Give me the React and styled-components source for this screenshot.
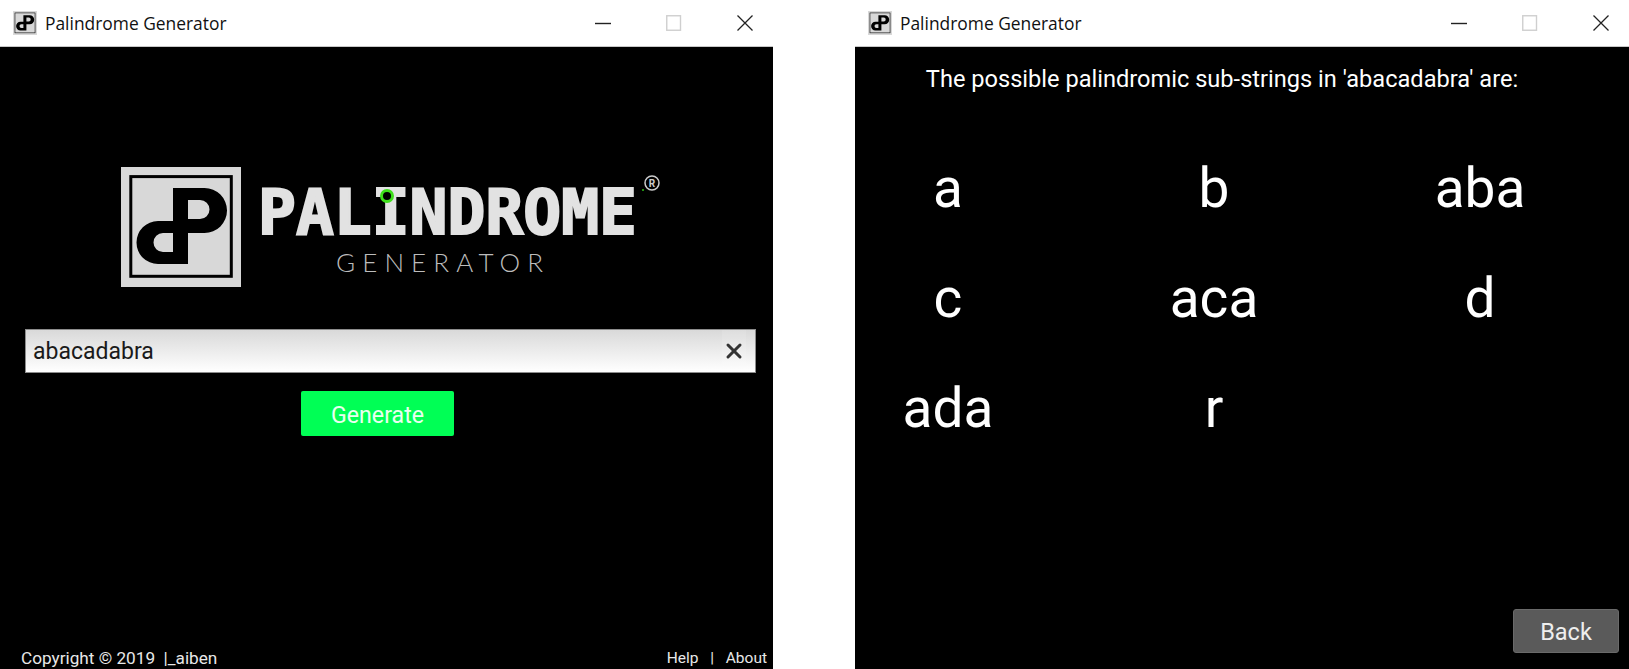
import React from 'react';
import styled, { createGlobalStyle } from 'styled-components';
import { X } from 'lucide-react';

const GlobalStyle = createGlobalStyle`
  html, body {
    margin: 0;
    padding: 0;
    background: #fff;
    overflow: hidden;
  }
  * {
    box-sizing: border-box;
  }
`;

const Screen = styled.div`
  display: flex;
  justify-content: space-between;
  width: 1629px;
  height: 669px;
`;

const Window = styled.section`
  display: flex;
  flex-direction: column;
  width: ${props => props.$width}px;
  height: 100%;
`;

const TitleBar = styled.header`
  display: flex;
  align-items: center;
  flex: none;
  height: 47px;
  padding-left: 13px;
  background: #fff;
  border-bottom: 1px solid #c8c8c8;
`;

const TitleText = styled.span`
  margin-left: 8px;
  font-family: 'Open Sans', sans-serif;
  font-size: 17.4px;
  color: #111;
  white-space: nowrap;
`;

const Controls = styled.div`
  display: flex;
  align-items: center;
  gap: 55px;
  margin-left: auto;
  padding-right: 20px;
`;

const ControlIcon = styled.svg`
  display: block;
  width: 16px;
  height: 16px;
  fill: none;
`;

const Body = styled.main`
  display: flex;
  flex-direction: column;
  flex: 1;
  min-height: 0;
  background: #000;
  font-family: Roboto, sans-serif;
  color: #fff;
`;

const BigLogo = styled.svg`
  display: block;
  flex: none;
  width: 560px;
  height: 130px;
  margin: 113px 0 0 110px;
`;

const SearchBox = styled.div`
  display: flex;
  align-items: center;
  height: 44px;
  margin: 39px 17px 0 25px;
  padding: 0 9px 0 7px;
  border: 1px solid #8c8c8c;
  background: linear-gradient(#d9d9d9, #ffffff);
`;

const SearchInput = styled.input`
  flex: 1;
  min-width: 0;
  border: 0;
  padding: 0;
  outline: 0;
  background: transparent;
  font-family: Roboto, sans-serif;
  font-size: 23px;
  color: #1a1a1a;
`;

const ClearButton = styled.span`
  display: flex;
  align-items: center;
  align-self: stretch;
  background: rgba(255, 255, 255, 0.12);
  color: #333;
`;

const GenerateButton = styled.button`
  align-self: flex-start;
  width: 153px;
  height: 45px;
  margin: 18px 0 0 301px;
  padding: 2px 0 0;
  border: 0;
  border-radius: 2px;
  background: #00ff55;
  font-family: Roboto, sans-serif;
  font-size: 23.2px;
  color: #eafff0;
`;

const Footer = styled.footer`
  display: flex;
  justify-content: space-between;
  margin-top: auto;
  padding: 0 6px 1px 21px;
  font-size: 17.2px;
  line-height: 20px;
  color: #e8e8e8;
`;

const FooterLinks = styled.span`
  font-size: 15.5px;
  word-spacing: 2px;
`;

const Heading = styled.h1`
  margin: 19px 0 0;
  padding-right: 40px;
  font-size: 23.6px;
  font-weight: 400;
  line-height: 26px;
  text-align: center;
`;

const ResultGrid = styled.ul`
  display: grid;
  grid-template-columns: repeat(3, 186px);
  grid-auto-rows: 60px;
  column-gap: 80px;
  row-gap: 50px;
  margin: 66px 0 0;
  padding: 0;
  list-style: none;
`;

const ResultItem = styled.li`
  font-size: 55px;
  line-height: 60px;
  text-align: center;
`;

const BackButton = styled.button`
  align-self: flex-end;
  width: 106px;
  height: 44px;
  margin: auto 10px 16px 0;
  padding: 2px 0 0;
  border: 1px solid #6a6a6a;
  border-radius: 3px;
  background: #5a5a5a;
  font-family: Roboto, sans-serif;
  font-size: 23.5px;
  color: #eee;
`;

const SmallMark = styled.svg`
  display: block;
  flex: none;
  width: 24px;
  height: 24px;
`;

function Mark() {
  return (
    <>
      <rect x="121" y="167" width="120" height="120" fill="#d8d8d8" />
      <rect x="130.8" y="176.6" width="100.5" height="99.7" fill="#d8d8d8" stroke="#000" strokeWidth="3" />
      <path
        fillRule="evenodd"
        fill="#000"
        d="M173 188H204.5A22.5 22.5 0 0 1 204.5 233H188V264H158A21.5 21.5 0 0 1 158 221H173ZM188 200V219H200A9.5 9.5 0 0 0 200 200ZM173 233H163A9.5 9.5 0 0 0 163 252H173Z"
      />
    </>
  );
}

function TitleRow() {
  return (
    <TitleBar>
      <SmallMark viewBox="121 167 120 120">
        <Mark />
      </SmallMark>
      <TitleText>Palindrome Generator</TitleText>
      <Controls>
        <ControlIcon viewBox="0 0 16 16">
          <path d="M0 8.5H16" stroke="#222" strokeWidth="1.4" />
        </ControlIcon>
        <ControlIcon viewBox="0 0 16 16">
          <rect x="0.75" y="0.75" width="13.75" height="14.5" stroke="#cfcfcf" strokeWidth="1.4" />
        </ControlIcon>
        <ControlIcon viewBox="0 0 16 16">
          <path d="M0.5 0.5L15.5 15.5M15.5 0.5L0.5 15.5" stroke="#222" strokeWidth="1.3" />
        </ControlIcon>
      </Controls>
    </TitleBar>
  );
}

const results = ['a', 'b', 'aba', 'c', 'aca', 'd', 'ada', 'r'];

export default function App() {
  return (
    <>
      <GlobalStyle />
      <Screen>
        <Window $width={773}>
          <TitleRow />
          <Body>
            <BigLogo viewBox="110 160 560 130">
              <Mark />
              <text
                x="258"
                y="234"
                textLength="379"
                lengthAdjust="spacingAndGlyphs"
                fontFamily="'DejaVu Sans Mono', monospace"
                fontWeight="700"
                fontSize="62"
                stroke="#e2e2e2"
                strokeWidth="2"
                fill="#e2e2e2"
              >
                PALINDROME
              </text>
              <circle cx="387" cy="196" r="5.5" fill="#000" stroke="#3fe01c" strokeWidth="3" />
              <circle cx="652" cy="183" r="7" fill="none" stroke="#ccc" strokeWidth="1.5" />
              <text x="652" y="187" textAnchor="middle" fontFamily="Roboto, sans-serif" fontSize="10" fontWeight="700" fill="#ccc">R</text>
              <circle cx="643" cy="190" r="1" fill="#2fc01a" />
              <text
                x="336"
                y="272"
                textLength="207"
                fontFamily="Lato, sans-serif"
                fontWeight="300"
                fontSize="26"
                fill="#bcbcbc"
              >
                GENERATOR
              </text>
            </BigLogo>
            <SearchBox>
              <SearchInput value="abacadabra" readOnly />
              <ClearButton>
                <X size={24} strokeWidth={3} />
              </ClearButton>
            </SearchBox>
            <GenerateButton>Generate</GenerateButton>
            <Footer>
              <span>Copyright © 2019 &nbsp;|_aiben</span>
              <FooterLinks>Help &nbsp;|&nbsp; About</FooterLinks>
            </Footer>
          </Body>
        </Window>
        <Window $width={774}>
          <TitleRow />
          <Body>
            <Heading>The possible palindromic sub-strings in 'abacadabra' are:</Heading>
            <ResultGrid>
              {results.map(item => (
                <ResultItem key={item}>{item}</ResultItem>
              ))}
            </ResultGrid>
            <BackButton>Back</BackButton>
          </Body>
        </Window>
      </Screen>
    </>
  );
}
